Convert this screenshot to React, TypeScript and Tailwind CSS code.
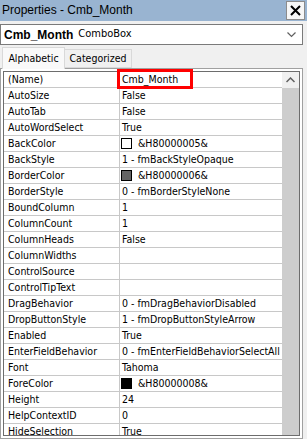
import React from 'react';

type Prop = { name: string; value: string; swatch?: string };

const PROPS: Prop[] = [
  { name: '(Name)', value: 'Cmb_Month' },
  { name: 'AutoSize', value: 'False' },
  { name: 'AutoTab', value: 'False' },
  { name: 'AutoWordSelect', value: 'True' },
  { name: 'BackColor', value: '&H80000005&', swatch: '#ffffff' },
  { name: 'BackStyle', value: '1 - fmBackStyleOpaque' },
  { name: 'BorderColor', value: '&H80000006&', swatch: '#646464' },
  { name: 'BorderStyle', value: '0 - fmBorderStyleNone' },
  { name: 'BoundColumn', value: '1' },
  { name: 'ColumnCount', value: '1' },
  { name: 'ColumnHeads', value: 'False' },
  { name: 'ColumnWidths', value: '' },
  { name: 'ControlSource', value: '' },
  { name: 'ControlTipText', value: '' },
  { name: 'DragBehavior', value: '0 - fmDragBehaviorDisabled' },
  { name: 'DropButtonStyle', value: '1 - fmDropButtonStyleArrow' },
  { name: 'Enabled', value: 'True' },
  { name: 'EnterFieldBehavior', value: '0 - fmEnterFieldBehaviorSelectAll' },
  { name: 'Font', value: 'Tahoma' },
  { name: 'ForeColor', value: '&H80000008&', swatch: '#000000' },
  { name: 'Height', value: '24' },
  { name: 'HelpContextID', value: '0' },
  { name: 'HideSelection', value: 'True' },
];

export default function App() {
  return (
    <div className="relative w-[307px] h-[439px] overflow-hidden bg-[#f0f0f0] flex flex-col text-black font-['Liberation_Sans',Arial,sans-serif]">
      {/* title bar */}
      <div className="h-[21px] shrink-0 bg-[#99b4d1] flex items-start justify-between pl-[2px] pr-[2px]">
        <span className="text-[12px] leading-[20px]">Properties - Cmb_Month</span>
        <button className="mt-[1px] w-[19px] h-[19px] bg-[#f7f7f7] border border-[#8c8c8c] flex items-center justify-center">
          <svg width="11" height="11" viewBox="0 0 11 11">
            <path d="M1 1 L10 10 M10 1 L1 10" stroke="#000" strokeWidth="2" />
          </svg>
        </button>
      </div>

      {/* object combo */}
      <div className="mt-[3px] w-[303px] h-[21px] shrink-0 bg-white border border-[#7a7a7a] flex items-center pl-[3px] pr-[6px]">
        <span className="text-[12px] font-bold">Cmb_Month</span>
        <span className="text-[11px] ml-[5px] font-['DejaVu_Sans_Condensed','DejaVu_Sans',sans-serif] [font-stretch:condensed] text-[10.5px]">ComboBox</span>
        <svg className="ml-auto" width="9" height="6" viewBox="0 0 9 6">
          <path d="M0.5 0.5 L4.5 4.5 L8.5 0.5" stroke="#606060" strokeWidth="1.2" fill="none" />
        </svg>
      </div>

      {/* tabs */}
      <div className="mt-[2px] h-[21px] shrink-0 flex items-end pl-[2px] text-[10.5px] font-['DejaVu_Sans_Condensed','DejaVu_Sans',sans-serif] [font-stretch:condensed]">
        <div className="h-[22px] w-[63px] bg-[#f9f9f9] border border-b-0 border-[#d9d9d9] flex items-center justify-center relative z-10 -mb-[1px]">
          Alphabetic
        </div>
        <div className="h-[19px] w-[67px] bg-[#f0f0f0] border border-l-0 border-[#d9d9d9] flex items-center justify-center">
          Categorized
        </div>
      </div>

      {/* property grid */}
      <div className="w-[303px] flex-1 border border-[#a0a0a0] bg-white p-[2px] min-h-0">
        <div className="h-full border border-[#6d6d6d] flex overflow-hidden text-[10.5px] font-['DejaVu_Sans_Condensed','DejaVu_Sans',sans-serif] [font-stretch:condensed]">
          <div className="flex-1 flex flex-col">
            {PROPS.map((p) => (
              <div key={p.name} className="h-[16px] shrink-0 flex border-b border-[#c8c8c8]">
                <div className="w-[116px] shrink-0 border-r border-[#c8c8c8] pl-[4px] leading-[15px] whitespace-nowrap overflow-hidden">
                  {p.name}
                </div>
                <div className="flex-1 flex items-center pl-[2px] leading-[15px] whitespace-nowrap overflow-hidden">
                  {p.swatch && (
                    <span
                      className="w-[11px] h-[11px] border border-black mr-[6px] -ml-[1px] shrink-0"
                      style={{ backgroundColor: p.swatch }}
                    />
                  )}
                  {p.value}
                </div>
              </div>
            ))}
          </div>
          {/* scrollbar */}
          <div className="w-[17px] shrink-0 flex flex-col bg-[#f0f0f0]">
            <div className="h-[16px] shrink-0 flex items-center justify-center">
              <svg width="9" height="6" viewBox="0 0 9 6">
                <path d="M0.5 5 L4.5 1 L8.5 5" stroke="#606060" strokeWidth="1.5" fill="none" />
              </svg>
            </div>
            <div className="flex-1 bg-[#cdcdcd]" />
          </div>
        </div>
      </div>

      {/* annotation highlight */}
      <div className="absolute left-[117px] top-[69px] w-[76px] h-[20px] border-[3px] border-[#ff0000]" />
    </div>
  );
}
